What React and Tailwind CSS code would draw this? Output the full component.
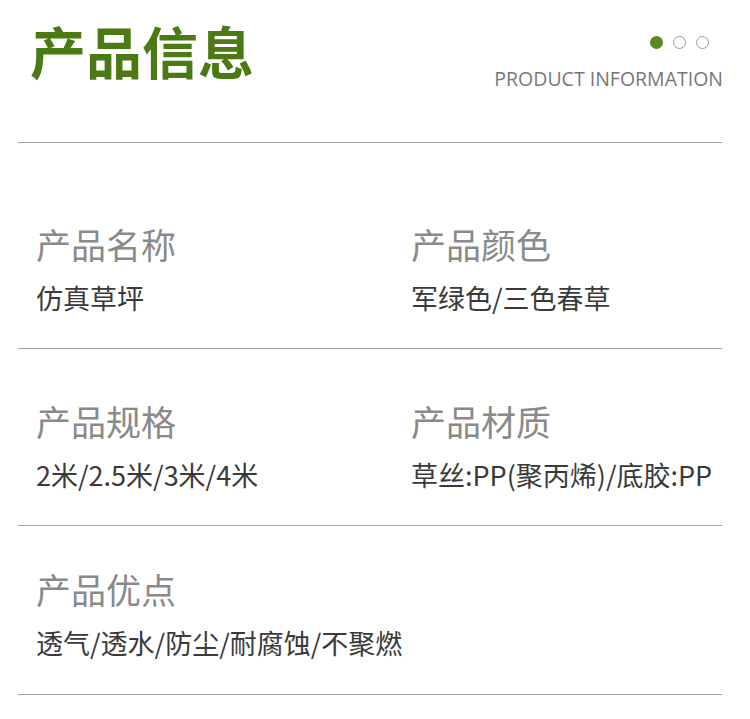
import React from 'react';

const cjk = { fontFamily: '"Noto Sans CJK SC", "Noto Sans", sans-serif' };

const Field = ({ label, value }) => (
  <div>
    <div className="text-[35px] leading-none text-[#8a8a8a]">{label}</div>
    <div className="mt-[23px] text-[27px] leading-none text-[#3a3a3a] whitespace-nowrap">{value}</div>
  </div>
);

const App = () => {
  return (
    <div className="w-[750px] h-[719px] bg-white overflow-hidden" style={cjk}>
      {/* Header */}
      <div className="ml-[18px] w-[704px] h-[143px] border-b border-[#a3a3a3] flex justify-between">
        <h1 className="pl-[12px] pt-[22px] text-[56px] leading-none font-bold text-[#4b7a14]">产品信息</h1>
        <div className="flex flex-col items-end pt-[36px] -mr-[1px]">
          <div className="flex gap-[10px] pr-[14px]">
            <span className="w-[13px] h-[13px] rounded-full bg-[#5a8a1e]"></span>
            <span className="w-[13px] h-[13px] rounded-full border border-[#9a9a9a]"></span>
            <span className="w-[13px] h-[13px] rounded-full border border-[#9a9a9a]"></span>
          </div>
          <div className="mt-[20px] text-[19.5px] leading-none text-[#777777]" style={{ fontFamily: '"Open Sans", sans-serif' }}>
            PRODUCT INFORMATION
          </div>
        </div>
      </div>

      {/* Name / Color */}
      <div className="ml-[18px] w-[704px] h-[206px] border-b border-[#a3a3a3] pt-[83px] pl-[18px] grid grid-cols-[375px_1fr]">
        <Field label="产品名称" value="仿真草坪" />
        <Field label="产品颜色" value="军绿色/三色春草" />
      </div>

      {/* Size / Material */}
      <div className="ml-[18px] w-[704px] h-[177px] border-b border-[#a3a3a3] pt-[54px] pl-[18px] grid grid-cols-[375px_1fr]">
        <Field label="产品规格" value="2米/2.5米/3米/4米" />
        <Field label="产品材质" value="草丝:PP(聚丙烯)/底胶:PP" />
      </div>

      {/* Advantages */}
      <div className="ml-[18px] w-[704px] h-[169px] border-b border-[#a3a3a3] pt-[45px] pl-[18px]">
        <Field label="产品优点" value="透气/透水/防尘/耐腐蚀/不聚燃" />
      </div>
    </div>
  );
};

export default App;
